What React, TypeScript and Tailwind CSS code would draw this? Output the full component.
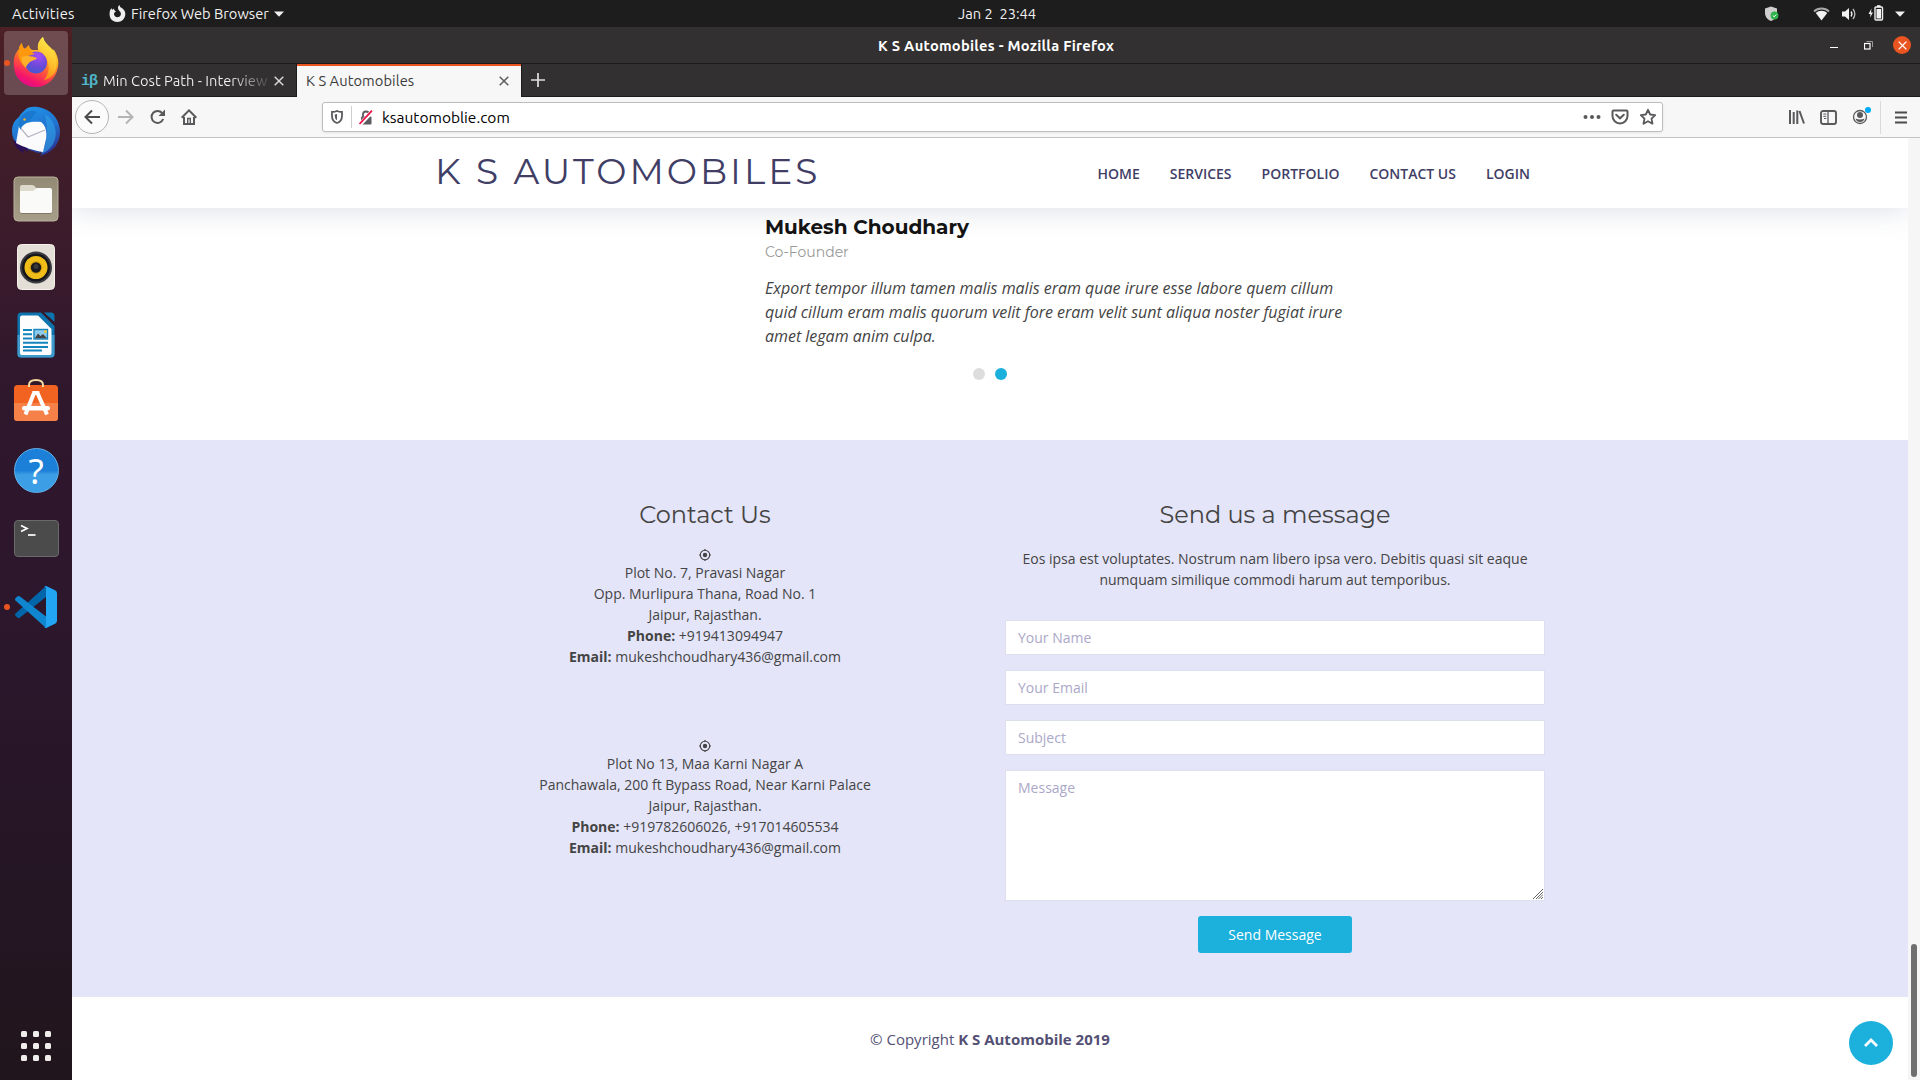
import type { ReactNode } from "react";

function FirefoxIcon() {
  return (
    <svg width="46" height="50" viewBox="0 0 46 50" className="block">
      <defs>
        <linearGradient id="fxBody" x1="0.75" y1="0" x2="0.3" y2="1">
          <stop offset="0" stopColor="#fff44f" />
          <stop offset="0.35" stopColor="#ffb01f" />
          <stop offset="0.6" stopColor="#ff5a36" />
          <stop offset="0.85" stopColor="#f5156c" />
          <stop offset="1" stopColor="#e00b8d" />
        </linearGradient>
        <linearGradient id="fxSwirl" x1="0.8" y1="0" x2="0.5" y2="1">
          <stop offset="0" stopColor="#fff44f" />
          <stop offset="0.6" stopColor="#ffc02e" />
          <stop offset="1" stopColor="#ff8a16" />
        </linearGradient>
        <radialGradient id="fxGlobe" cx="0.6" cy="0.2" r="0.9">
          <stop offset="0" stopColor="#a94df5" />
          <stop offset="0.55" stopColor="#6a4ad8" />
          <stop offset="1" stopColor="#3f5bd0" />
        </radialGradient>
      </defs>
      <path d="M6 12 C6 9 8 7 9 6 C9 9 10 11 12 12 L16 8 C16 10 17 12 19 13 L25 13 C24 7 27 2 30 0 C31 5 35 8 38 11 C39 12 40 13 41 13 C45 19 46 25 45 30 C43 42 34 50 23 50 C11 50 2 42 1 30 C0 22 2 16 6 12 Z" fill="url(#fxBody)" />
      <path d="M30 0 C31 5 35 8 38 12 C43 18 45 24 43 32 C42 37 37 42 31 43 C36 37 37 29 34 22 C31 16 24 13 25 8 C26 4 28 2 30 0 Z" fill="url(#fxSwirl)" />
      <circle cx="23" cy="25.500" r="11" fill="url(#fxGlobe)" />
      <path d="M6 12 C6 9 8 7 9 6 C9 9 10 11 12 12 L16 8 C16 13 18 15 22 17 C19 18 14 18 12 22 C12 26 12 28 13 31 C8 27 4 20 6 12 Z" fill="#ff980e" />
      <path d="M9 20 C14 18 19 19 24 21 C22 24 18 23 16 26 C14 28 13 29 13 31 C10 28 8 24 9 20 Z" fill="#ffb12b" />
    </svg>
  );
}

function ThunderbirdIcon() {
  return (
    <svg width="50" height="50" viewBox="0 0 50 50" className="block">
      <defs>
        <linearGradient id="tbBody" x1="0.3" y1="0" x2="0.7" y2="1">
          <stop offset="0" stopColor="#1f93e8" />
          <stop offset="0.5" stopColor="#2272cf" />
          <stop offset="1" stopColor="#2a2f8f" />
        </linearGradient>
      </defs>
      <path d="M14 4 C17 0 25 0 31 2 C42 5 49 15 49 26 C49 38 41 47 29 50 L32 46 L27 47 L8 40 C3 36 1 30 1 25 C1 18 4 14 8 11 C9 8 12 6 14 4 Z" fill="url(#tbBody)" />
      <path d="M2 34 C4 41 8 45 13 47 L12 43 L17 46 L16 40 Z" fill="#2b1058" />
      <path d="M34 8 C44 14 47 27 43 36 C40 43 35 46 30 48 C35 40 38 26 34 8 Z" fill="#2f9be6" opacity="0.7" />
      <path d="M8 20 C12 17 22 15 30 16 C35 20 36 26 35 33 L32 46 C24 45 12 41 5 37 Z" fill="#fbfbfd" />
      <path d="M8 20 L17 31 L34 24" fill="none" stroke="#b3b5c2" strokeWidth="1.200" />
      <path d="M9 13 C12 6 20 3 26 6 C22 9 20 15 14 18 C11 20 9 23 10 24 C7 20 7 16 9 13 Z" fill="#1a78cf" />
      <circle cx="13.500" cy="13.500" r="1.300" fill="#e8a93c" />
    </svg>
  );
}

function FilesIcon() {
  return (
    <svg width="46" height="46" viewBox="0 0 46 46" className="block">
      <defs>
        <linearGradient id="flBg" x1="0" y1="0" x2="0" y2="1">
          <stop offset="0" stopColor="#938a75" />
          <stop offset="1" stopColor="#a69e88" />
        </linearGradient>
      </defs>
      <rect x="1" y="1" width="44" height="44" rx="4" fill="url(#flBg)" stroke="#b8b29c" />
      <path d="M7 11 Q7 9 9 9 L19 9 Q21 9 22 10.500 L23 12 H37 V20 H7 Z" fill="#dedacb" />
      <path d="M7 15 H20 L24 12 H37 Q39 12 39 14 V35 Q39 37 37 37 H9 Q7 37 7 35 Z" fill="#fafaf8" />
      <path d="M8 37.500 H38" stroke="#817964" strokeWidth="1" />
    </svg>
  );
}

function SpeakerIcon() {
  return (
    <svg width="38" height="46" viewBox="0 0 38 46" className="block">
      <rect x="0.500" y="0.500" width="37" height="45" rx="4" fill="#e4dfd6" stroke="#f4f1ea" />
      <circle cx="19" cy="23.500" r="16" fill="#3b3b43" />
      <circle cx="19" cy="23.500" r="14" fill="#17171b" />
      <circle cx="19" cy="23.500" r="11.500" fill="#f1bd18" />
      <circle cx="19" cy="23.500" r="6.500" fill="#d8a512" />
      <circle cx="19" cy="23.500" r="5.200" fill="#1b1b1d" />
      <circle cx="19" cy="22.500" r="2.500" fill="#39393d" />
    </svg>
  );
}

function WriterIcon() {
  return (
    <svg width="38" height="46" viewBox="0 0 38 46" className="block">
      <path d="M4 0.500 H24 L37.500 14 V42 Q37.500 45.500 34 45.500 H4 Q0.500 45.500 0.500 42 V4 Q0.500 0.500 4 0.500 Z" fill="#0d74ad" />
      <path d="M0.500 23 H37.500 V42 Q37.500 45.500 34 45.500 H4 Q0.500 45.500 0.500 42 Z" fill="#3d9acb" />
      <path d="M27 0.500 H34 Q37.500 0.500 37.500 4 V10 Z" fill="#0d74ad" />
      <path d="M5 3.500 H21 L34.500 17 V41 Q34.500 43 32.500 43 H5 Q3 43 3 41 V5.500 Q3 3.500 5 3.500 Z" fill="#fdfdfd" />
      <path d="M6 18 H15 M6 22.300 H15 M6 26.500 H15 M6 30.700 H31 M6 34.900 H31 M6 38.500 H25" stroke="#1484bd" strokeWidth="2" />
      <rect x="17" y="17.500" width="13.500" height="9.500" fill="#8ccbee" stroke="#1484bd" strokeWidth="1.400" />
      <path d="M17.800 26.300 L21 21.500 L23.500 24 L26 22 L30 26.300 Z" fill="#444" />
      <circle cx="28.500" cy="19.500" r="1.500" fill="#f3c634" />
    </svg>
  );
}

function SoftwareIcon() {
  return (
    <svg width="46" height="44" viewBox="0 0 46 44" className="block">
      <rect x="1" y="7" width="44" height="36" rx="3.500" fill="#f26322" />
      <path d="M1 25 H45 V39.500 Q45 43 41.500 43 H4.500 Q1 43 1 39.500 Z" fill="#f58048" />
      <path d="M16 9 V7 Q16 2 23 2 Q30 2 30 7 V9" fill="none" stroke="#f7d9a2" strokeWidth="2" />
      <path d="M21 15 L12.500 36.500 M24.500 15 L34 36.500" stroke="#fff" strokeWidth="4" />
      <rect x="19.300" y="13" width="7" height="4" fill="#fff" />
      <rect x="9" y="28" width="28" height="4.500" rx="2.200" fill="#fff" />
    </svg>
  );
}

function HelpIcon() {
  return (
    <div className="flex h-[45px] w-[45px] items-center justify-center rounded-full border border-[#5fb2ee] bg-gradient-to-b from-[#1c7fd8] from-50% to-[#3c9ee4] to-60% pb-[1px] font-['Noto_Sans',sans-serif] text-[35px] leading-none text-white">
      ?
    </div>
  );
}

function TerminalIcon() {
  return (
    <div className="flex h-[37px] w-[45px] rounded-[4px] border border-[#6a6a6a] bg-[#4b4b4b]">
      <svg width="24" height="20" viewBox="0 0 24 20" className="block">
        <path d="M6 4.500 L12 7.500 L6 10.500" fill="none" stroke="#fff" strokeWidth="1.700" />
        <path d="M13 14 H20.500" stroke="#fff" strokeWidth="1.700" />
      </svg>
    </div>
  );
}

function CodeIcon() {
  return (
    <svg width="42" height="42" viewBox="0 0 42 42" className="block">
      <path d="M31 0 L41 5 V37 L31 42 V11 L5 31.500 Q3.500 32.500 2.200 31.500 L0.500 29.800 Q-0.500 28.700 0.500 27.600 Z" fill="#0065a9" />
      <path d="M0.500 14.400 Q-0.500 13.300 0.500 12.200 L2.200 10.500 Q3.500 9.500 5 10.500 L31 30.500 V42 Z" fill="#1086d0" />
      <path d="M31 0 L40 4.300 Q42 5.300 42 7 V35 Q42 36.700 40 37.700 L31 42 Q29.800 42 29 41 Q31 42 31 39 V3 Q31 0 29 1 Q30 0 31 0 Z" fill="#22a5f3" />
    </svg>
  );
}

function DockItem({ children, active, running }: { children: ReactNode; active?: boolean; running?: boolean }) {
  return (
    <div className="relative flex h-[68px] w-[72px] shrink-0 items-center justify-center">
      {running && <span className="absolute left-[4px] top-[31px] h-[6px] w-[6px] rounded-full bg-[#e95420]" />}
      <div className={active ? "flex h-16 w-16 items-center justify-center rounded-[4px] bg-white/20" : "flex items-center justify-center"}>
        {children}
      </div>
    </div>
  );
}

function Dock() {
  return (
    <aside className="flex w-[72px] shrink-0 flex-col bg-[linear-gradient(180deg,#4c2024_0px,#421e28_90px,#3a1b2c_230px,#2f172c_370px,#2d172d_560px,#261626_800px,#21151c_1053px)] pt-[2px]">
      <DockItem active running><div className="pb-[2px]"><FirefoxIcon /></div></DockItem>
      <DockItem><ThunderbirdIcon /></DockItem>
      <DockItem><FilesIcon /></DockItem>
      <DockItem><SpeakerIcon /></DockItem>
      <DockItem><WriterIcon /></DockItem>
      <DockItem><div className="pb-[6px]"><SoftwareIcon /></div></DockItem>
      <DockItem><div className="pb-[1px]"><HelpIcon /></div></DockItem>
      <DockItem><div className="pb-[1px]"><TerminalIcon /></div></DockItem>
      <DockItem running><CodeIcon /></DockItem>
      <div className="mx-auto mb-[19px] mt-auto grid grid-cols-3 gap-[6px]">
        {Array.from({ length: 9 }, (_, i) => (
          <span key={i} className="h-[6px] w-[6px] rounded-[1.500px] bg-[#efeeed]" />
        ))}
      </div>
    </aside>
  );
}

function TopBar() {
  return (
    <header className="flex h-[27px] items-center bg-[#1d1d1d] text-[14.670px] leading-5 text-[#f0f0f0]">
      <div className="flex w-[958px] items-center pl-[12px]">
        <span className="w-[97px] tracking-[0.250px]">Activities</span>
        <svg width="17" height="17" viewBox="0 0 17 17" className="block">
          <path d="M2.500 3 C2.500 4 3 4.500 3.500 4.800 L5 3.500 C5 5 5.500 5.500 7 6.200 C6.500 7 5 7 5 9 C5 11 6.500 12.200 8.500 12.200 C11 12.200 12.300 10 11.800 8 C11.300 6 9 5.500 9 3 C9 1.500 9.500 0.500 10.500 0 C10.700 2 12 2.500 13.500 3.500 C15.500 5 16.500 7 16.300 9.500 C16 14 12.500 17 8.500 17 C4 17 0.800 14 0.600 9.800 C0.400 7 1 5 2.500 3 Z" fill="#efefef" />
        </svg>
        <span className="ml-[5px] w-[138px] whitespace-nowrap">Firefox Web Browser</span>
        <svg width="10" height="6" viewBox="0 0 10 6" className="ml-[5px] block"><path d="M0 0.500 H10 L5 5.800 Z" fill="#f0f0f0" /></svg>
      </div>
      <span className="whitespace-pre">{"Jan 2  23:44"}</span>
      <div className="ml-auto flex items-center pr-[15px]">
        <svg width="15" height="16" viewBox="0 0 15 16" className="mr-[34px] block">
          <path d="M7 0.500 L13 2.500 V7 C13 11 10 14 7 15 C4 14 1 11 1 7 V2.500 Z" fill="#cfcfcf" />
          <circle cx="10.500" cy="9.500" r="3.900" fill="#2fb24c" />
          <path d="M8.800 9.500 L10.200 10.800 L12.300 8.500" fill="none" stroke="#fff" strokeWidth="1" />
        </svg>
        <svg width="17" height="14" viewBox="0 0 17 14" className="mr-[11px] block">
          <path d="M1 4.500 C5 0.500 12 0.500 16 4.500" fill="none" stroke="#aaa" strokeWidth="1.800" />
          <path d="M2.800 6 C6 3 11 3 14.200 6 L8.500 13.500 Z" fill="#f2f2f2" />
        </svg>
        <svg width="16" height="14" viewBox="0 0 16 14" className="mr-[11px] block">
          <path d="M1 4.500 H4 L8 1 V13 L4 9.500 H1 Z" fill="#f2f2f2" />
          <path d="M10 4.500 Q11.800 7 10 9.500" fill="none" stroke="#f2f2f2" strokeWidth="1.300" />
          <path d="M12 2 Q15.700 7 12 12" fill="none" stroke="#bbb" strokeWidth="1.300" />
        </svg>
        <svg width="16" height="16" viewBox="0 0 16 16" className="mb-[1px] mr-[11px] block">
          <path d="M3.500 3.500 L0.500 9 H2.500 L2 12.500 L5 7.500 H3 Z" fill="#f2f2f2" />
          <rect x="7" y="2" width="7.500" height="13" rx="1" fill="none" stroke="#f2f2f2" strokeWidth="1.400" />
          <rect x="9" y="0.200" width="3.500" height="2" fill="#f2f2f2" />
          <rect x="8.500" y="4" width="4.500" height="9.500" fill="#f2f2f2" />
        </svg>
        <svg width="10" height="6" viewBox="0 0 10 6" className="block"><path d="M0 0.500 H10 L5 5.800 Z" fill="#f0f0f0" /></svg>
      </div>
    </header>
  );
}

function Cross({ color, size }: { color: string; size: number }) {
  return (
    <svg width={size} height={size} viewBox="0 0 10 10" className="block shrink-0">
      <path d="M0.700 0.700 L9.300 9.300 M9.300 0.700 L0.700 9.300" stroke={color} strokeWidth="1.500" fill="none" />
    </svg>
  );
}

function TitleBar() {
  return (
    <div className="flex h-[37px] items-center border-b border-[#1c1b1c] bg-[#333031] pr-[9px]">
      <div className="w-[806px]" />
      <span className="w-[240px] whitespace-nowrap pt-[2px] text-[14.670px] font-bold leading-5 tracking-[0.270px] text-white">K S Automobiles - Mozilla Firefox</span>
      <div className="ml-auto flex items-center">
        <span className="mr-[26px] mt-[4px] h-[1px] w-[8px] bg-white" />
        <svg width="9" height="9" viewBox="0 0 9 9" className="mr-[20px] block">
          <rect x="0.500" y="2.500" width="5.500" height="5.500" fill="none" stroke="#fff" strokeWidth="1.200" />
          <path d="M2.500 0.500 H8.500 V6" fill="none" stroke="#9a9a9a" />
        </svg>
        <span className="flex h-[18px] w-[18px] items-center justify-center rounded-full bg-[#e95420]"><Cross color="#fff" size={9} /></span>
      </div>
    </div>
  );
}

function TabStrip() {
  return (
    <div className="flex h-[33px] bg-[#333031] text-[14.670px] leading-5">
      <div className="flex w-[225px] items-center border-b border-r border-[#1c1b1c] pl-[9px] pt-[1px]">
        <span className="w-[22px] pt-[2px] font-['Liberation_Mono',monospace] text-[15px] font-bold tracking-[-1px] text-[#4fb6cc]">iβ</span>
        <span className="w-[165px] overflow-hidden whitespace-nowrap bg-[linear-gradient(90deg,#f3f3f3_128px,#5a5758_162px)] bg-clip-text text-transparent">
          Min Cost Path - Interview
        </span>
        <span className="ml-[6px]"><Cross color="#d8d8d8" size={10} /></span>
      </div>
      <div className="flex w-[224px] items-center border-t-2 border-[#e95420] bg-[#f7f7f7] pb-[1px] pl-[9px] pr-[12px]">
        <span className="tracking-[0.070px] text-[#3c3c3c]">K S Automobiles</span>
        <span className="ml-auto"><Cross color="#5c5c5c" size={10} /></span>
      </div>
      <div className="flex flex-1 items-center border-b border-l border-[#1c1b1c] pl-[9px]">
        <svg width="14" height="14" viewBox="0 0 14 14" className="block"><path d="M7 0 V14 M0 7 H14" stroke="#e0e0e0" strokeWidth="1.700" /></svg>
      </div>
    </div>
  );
}

function NavToolbar() {
  return (
    <div className="flex h-[41px] items-center border-b border-[#c3c3c3] bg-[#f7f7f7] text-[#55555a]">
      <div className="ml-[3px] flex h-[34px] w-[34px] items-center justify-center rounded-full border border-[#b5b5b5] bg-[#fbfbfb]">
        <svg width="17" height="16" viewBox="0 0 17 16" className="block"><path d="M16 8 H1.500 M8 1.500 L1.500 8 L8 14.500" fill="none" stroke="#4c4c4f" strokeWidth="2" /></svg>
      </div>
      <svg width="17" height="16" viewBox="0 0 17 16" className="ml-[8px] block"><path d="M1 8 H15.500 M9 1.500 L15.500 8 L9 14.500" fill="none" stroke="#b4b4b4" strokeWidth="2" /></svg>
      <svg width="16" height="16" viewBox="0 0 16 16" className="ml-[16px] block">
        <path d="M13.200 10 A6 6 0 1 1 12.500 4.500" fill="none" stroke="#59595c" strokeWidth="2" />
        <path d="M15 0.500 V7 H8.500 Z" fill="#59595c" />
      </svg>
      <svg width="16" height="16" viewBox="0 0 16 16" className="ml-[15px] block">
        <path d="M0.700 8.700 L8 1.400 L15.300 8.700" fill="none" stroke="#59595c" strokeWidth="2" />
        <path d="M3 8 V15 H13 V8" fill="none" stroke="#59595c" strokeWidth="2" />
        <path d="M6.700 15 V9.500 H9.300 V15" fill="none" stroke="#59595c" strokeWidth="1.400" />
      </svg>
      <div className="ml-[125px] flex h-[30px] w-[1341px] items-center rounded-[3px] border border-[#bdbdbd] bg-white shadow-[0_1px_3px_rgba(0,0,0,0.080)]">
        <svg width="12" height="14" viewBox="0 0 12 14" className="ml-[8px] block">
          <path d="M1 2 Q4 2 6 1 Q8 2 11 2 V6 C11 10 9 12 6 13 C3 12 1 10 1 6 Z" fill="none" stroke="#5c5c60" strokeWidth="1.800" />
          <path d="M6 4 V10.300 Q3.800 9 3.800 6 V4.400 Z" fill="#5c5c60" />
        </svg>
        <span className="ml-[8px] h-[22px] w-[1px] bg-[#cfcfcf]" />
        <svg width="14" height="15" viewBox="0 0 14 15" className="ml-[7px] block">
          <path d="M4 7 V4.500 A3 3 0 0 1 10 4.500 V7" fill="none" stroke="#5c5c60" strokeWidth="1.800" />
          <rect x="2" y="6.500" width="10.500" height="8" rx="1" fill="#5c5c60" />
          <path d="M0.500 15 L13.500 1" stroke="#fff" strokeWidth="4" />
          <path d="M0.500 14 L13 0.700" stroke="#ee1144" strokeWidth="1.800" />
        </svg>
        <span className="ml-[9px] pt-[2px] text-[15.500px] leading-5 text-black">ksautomoblie.com</span>
        <svg width="18" height="4" viewBox="0 0 18 4" className="ml-auto block" fill="#59595c"><circle cx="2.500" cy="2" r="2" /><circle cx="9" cy="2" r="2" /><circle cx="15.500" cy="2" r="2" /></svg>
        <svg width="18" height="16" viewBox="0 0 18 16" className="ml-[10px] block" fill="none" stroke="#59595c" strokeWidth="2">
          <path d="M2.500 1.500 H15.500 Q16.500 1.500 16.500 2.500 V7 A7.500 7.500 0 0 1 1.500 7 V2.500 Q1.500 1.500 2.500 1.500 Z" />
          <path d="M5.200 5.800 L9 9.300 L12.800 5.800" strokeLinecap="round" />
        </svg>
        <svg width="18" height="18" viewBox="0 0 18 18" className="ml-[10px] mr-[5px] block">
          <path d="M9 1.800 L11.200 6.500 L16.200 7.100 L12.500 10.600 L13.500 15.700 L9 13.200 L4.500 15.700 L5.500 10.600 L1.800 7.100 L6.800 6.500 Z" fill="none" stroke="#59595c" strokeWidth="1.800" strokeLinejoin="round" />
        </svg>
      </div>
      <svg width="16" height="14" viewBox="0 0 16 14" className="ml-[126px] block" stroke="#59595c" strokeWidth="2" fill="none"><path d="M1 0 V14 M4.700 2 V14 M8.300 0.500 V14 M10.500 1 L15 13.500" /></svg>
      <svg width="17" height="15" viewBox="0 0 17 15" className="ml-[15px] block" stroke="#59595c" fill="none">
        <rect x="1" y="1" width="15" height="13" rx="2" strokeWidth="1.900" />
        <path d="M8 1 V14" strokeWidth="1.300" /><path d="M3.300 4 H6.300 M3.300 6.300 H6.300 M4 8.500 H6.300" strokeWidth="1" />
      </svg>
      <div className="relative ml-[15px] h-[16px] w-[16px]">
        <svg width="16" height="16" viewBox="0 0 16 16" className="block">
          <circle cx="8" cy="8" r="6.500" fill="none" stroke="#59595c" strokeWidth="1.300" />
          <circle cx="8" cy="6" r="3" fill="#59595c" />
          <path d="M3.500 9.500 Q8 11.500 12.500 9.500 Q11.500 13 8 13 Q4.500 13 3.500 9.500 Z" fill="#59595c" />
        </svg>
        <span className="absolute -top-[2px] left-[13px] h-[6px] w-[6px] rounded-full bg-[#00aaf5]" />
      </div>
      <span className="ml-[12px] h-[33px] w-[1px] bg-[#dadada]" />
      <svg width="12" height="13" viewBox="0 0 12 13" className="ml-[14px] block" stroke="#4c4c4f" strokeWidth="1.900"><path d="M0 1.500 H12 M0 6.500 H12 M0 11.500 H12" /></svg>
    </div>
  );
}

function SiteHeader() {
  return (
    <header className="relative z-10 flex h-[70px] shrink-0 justify-center bg-white shadow-[0_0_30px_rgba(127,137,161,0.300)]">
      <div className="flex w-[1110px] justify-between">
        <h1 className="mt-[12px] whitespace-nowrap font-[Montserrat,sans-serif] text-[36px] font-normal leading-[43px] tracking-[3px] text-[#413e66]">
          K S AUTOMOBILES
        </h1>
        <nav className="mr-[15px] mt-[25px] flex gap-[30px] text-sm font-semibold leading-[21px] text-[#413e66]">
          <a>HOME</a>
          <a>SERVICES</a>
          <a>PORTFOLIO</a>
          <a>CONTACT US</a>
          <a>LOGIN</a>
        </nav>
      </div>
    </header>
  );
}

function Testimonial() {
  return (
    <section className="h-[232px] shrink-0 bg-white pt-[7px]">
      <div className="ml-[693px]">
        <h3 className="font-[Montserrat,sans-serif] text-[20px] font-bold leading-6 text-[#111]">Mukesh Choudhary</h3>
        <h4 className="mt-[4px] font-[Montserrat,sans-serif] text-[14px] font-normal leading-[18px] text-[#999]">Co-Founder</h4>
        <p className="mt-[15px] whitespace-nowrap text-base italic leading-6 tracking-[-0.012px] text-[#444]">
          Export tempor illum tamen malis malis eram quae irure esse labore quem cillum
          <br />
          quid cillum eram malis quorum velit fore eram velit sunt aliqua noster fugiat irure
          <br />
          amet legam anim culpa.
        </p>
      </div>
      <div className="mt-[20px] flex justify-center gap-[10px]">
        <span className="h-3 w-3 rounded-full bg-[#ddd]" />
        <span className="h-3 w-3 rounded-full bg-[#1bb1dc]" />
      </div>
    </section>
  );
}

function LocateIcon() {
  return (
    <svg width="12" height="12" viewBox="0 0 12 12" className="mx-auto block">
      <circle cx="6" cy="6" r="4.700" fill="none" stroke="#444" strokeWidth="1.100" />
      <circle cx="6" cy="6" r="2.200" fill="#444" />
      <path d="M6 0 V1.500 M6 10.500 V12 M0 6 H1.500 M10.500 6 H12" stroke="#444" strokeWidth="1.200" />
    </svg>
  );
}

function Address({ lines, phone }: { lines: string[]; phone: string }) {
  return (
    <address className="text-center text-sm not-italic leading-[21px]">
      <div className="pb-[1px] pt-[1px]"><LocateIcon /></div>
      {lines.map((l) => (
        <div key={l}>{l}</div>
      ))}
      <div><strong>Phone:</strong> {phone}</div>
      <div><strong>Email:</strong> mukeshchoudhary436@gmail.com</div>
    </address>
  );
}

const field =
  "block h-[35px] w-full border border-[#dcdfec] bg-white px-3 text-sm leading-[21px] text-[#413e66] outline-none placeholder:text-[#aba8c8] placeholder:opacity-100";

function Contact() {
  return (
    <section className="flex h-[557px] shrink-0 justify-center bg-[#e4e5f9] pt-[60px] text-[#444]">
      <div className="grid w-[1140px] grid-cols-2">
        <div className="px-[15px]">
          <h2 className="text-center font-[Montserrat,sans-serif] text-[24px] font-normal leading-[29px]">Contact Us</h2>
          <div className="mt-[19px] flex flex-col gap-[72px]">
            <Address lines={["Plot No. 7, Pravasi Nagar", "Opp. Murlipura Thana, Road No. 1", "Jaipur, Rajasthan."]} phone="+919413094947" />
            <Address lines={["Plot No 13, Maa Karni Nagar A", "Panchawala, 200 ft Bypass Road, Near Karni Palace", "Jaipur, Rajasthan."]} phone="+919782606026, +917014605534" />
          </div>
        </div>
        <div className="px-[15px]">
          <h2 className="text-center font-[Montserrat,sans-serif] text-[24px] font-normal leading-[29px]">Send us a message</h2>
          <p className="mt-[19px] text-center text-sm leading-[21px]">
            Eos ipsa est voluptates. Nostrum nam libero ipsa vero. Debitis quasi sit eaque
            <br />
            numquam similique commodi harum aut temporibus.
          </p>
          <form className="mt-[30px] flex flex-col gap-[15px]">
            <input className={field} placeholder="Your Name" />
            <input className={field} placeholder="Your Email" />
            <input className={field} placeholder="Subject" />
            <div className="relative">
              <textarea
                className="block h-[131px] w-full resize-none border border-[#dcdfec] bg-white px-3 py-[6px] text-sm leading-[21px] outline-none placeholder:text-[#aba8c8] placeholder:opacity-100"
                placeholder="Message"
              />
              <svg width="10" height="10" viewBox="0 0 10 10" className="absolute bottom-[2px] right-[2px] block">
                <path d="M0 10 L10 0 M3 10 L10 3 M5.500 10 L10 5.500 M8 10 L10 8" stroke="#666" strokeWidth="1" />
              </svg>
            </div>
            <button type="button" className="mx-auto block h-[37px] w-[154px] rounded-[3px] bg-[#1bb1dc] text-sm leading-[21px] text-white">
              Send Message
            </button>
          </form>
        </div>
      </div>
    </section>
  );
}

function Page() {
  return (
    <div className="flex min-h-0 flex-1">
      <main className="relative flex w-[1836px] flex-col overflow-hidden bg-white">
        <SiteHeader />
        <Testimonial />
        <Contact />
        <footer className="flex flex-1 items-center justify-center text-[15px] leading-5 text-[#535074]">
          <p className="pt-[1px]">© Copyright <strong>K S Automobile 2019</strong></p>
        </footer>
        <a className="absolute bottom-[15px] right-[15px] flex h-[44px] w-[44px] items-center justify-center rounded-full bg-[#1bb1dc]">
          <svg width="14" height="10" viewBox="0 0 14 10" className="mb-[1px] block"><path d="M1 8 L7 2 L13 8" fill="none" stroke="#fff" strokeWidth="2.800" /></svg>
        </a>
      </main>
      <div className="flex w-[12px] flex-col justify-end bg-[#f6f6f6] pb-[3px]">
        <span className="mx-auto h-[133px] w-[6px] rounded-full bg-[#6f6f6f]" />
      </div>
    </div>
  );
}

export default function App() {
  return (
    <div className="flex h-[1080px] w-[1920px] flex-col overflow-hidden font-[Ubuntu,'Noto_Sans',sans-serif]">
      <TopBar />
      <div className="flex min-h-0 flex-1">
        <Dock />
        <div className="flex min-w-0 flex-1 flex-col">
          <TitleBar />
          <TabStrip />
          <NavToolbar />
          <div className="flex min-h-0 flex-1 flex-col font-['Open_Sans',sans-serif]">
            <Page />
          </div>
        </div>
      </div>
    </div>
  );
}
